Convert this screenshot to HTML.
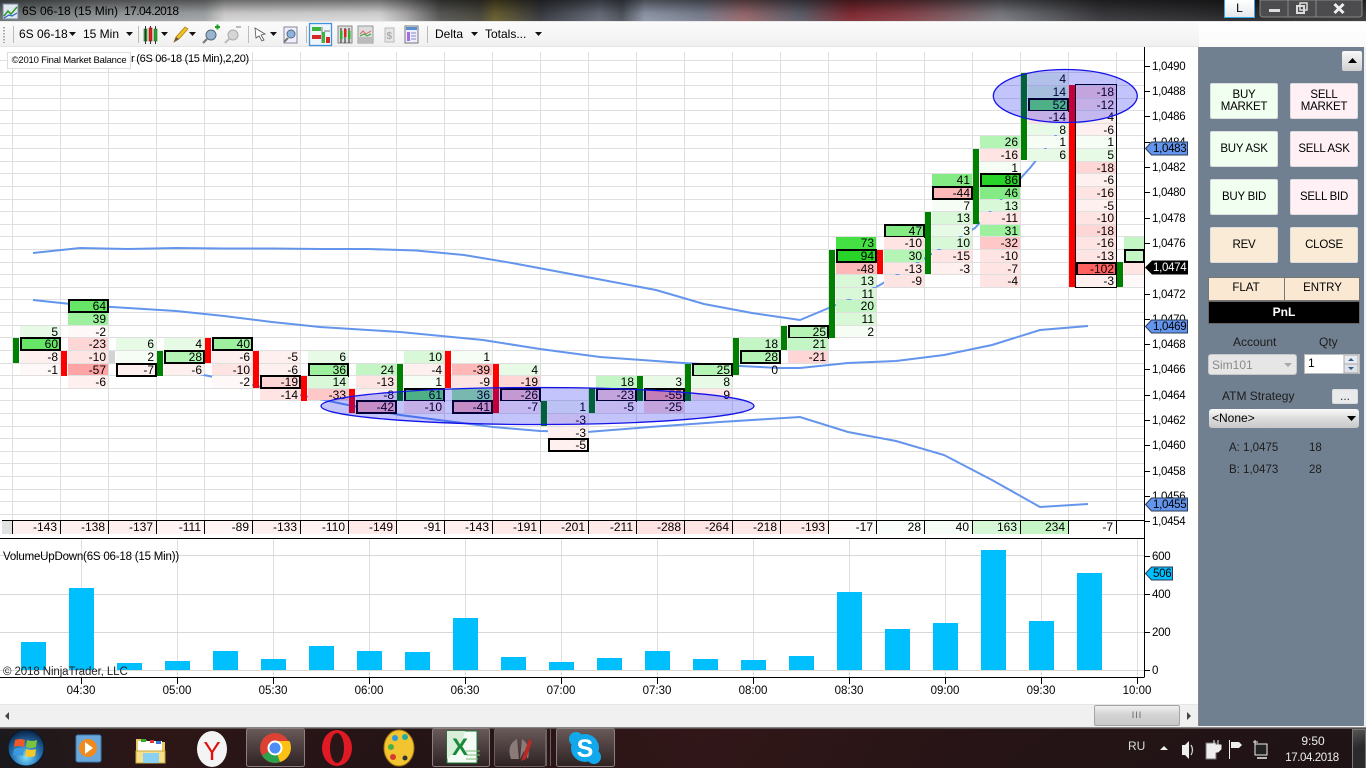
<!DOCTYPE html>
<html><head><meta charset="utf-8"><title>6S 06-18 (15 Min)</title>
<style>
html,body{margin:0;padding:0;width:1366px;height:768px;overflow:hidden;background:#fff}
body{position:relative;font:12px/14px "Liberation Sans",sans-serif;color:#000}
.a,svg.a{position:absolute}
#title{left:0;top:0;width:1366px;height:22px;background:linear-gradient(180deg,rgba(0,0,0,.5),rgba(0,0,0,.08) 60%,rgba(255,255,255,.05)),linear-gradient(90deg,#6a7070 0,#969a9c 100px,#a4a8aa 205px,#d8d6d6 225px,#dcdcdc 380px,#b0aeb0 405px,#5a5a58 440px,#4c4a40 480px,#6a6030 495px,#3a3c42 540px,#686e7c 600px,#50555e 622px,#939bac 645px,#7b8192 700px,#9a6a6e 745px,#5c606c 800px,#842c34 850px,#8a424a 905px,#7c7e84 1000px,#3a3a3e 1100px,#2a2a2c 1230px,#3a3a3c 1366px)}
#tline{left:0;top:21px;width:1366px;height:1px;background:#e8e8e8}
#tb{left:0;top:22px;width:1366px;height:25px;background:linear-gradient(180deg,#fbfbfb,#f0f0f0);border-bottom:1px solid #e4e4e4;box-sizing:border-box}
#tb2{left:1199px;top:22px;width:167px;height:25px;background:linear-gradient(180deg,#fff,#fafafa)}
.col{position:absolute;left:0;top:0}
.c{position:absolute;left:20px;width:38px;padding-right:2px;height:12px;line-height:12px;text-align:right;font-size:12px;color:#000;white-space:nowrap}
.b{margin-top:-1px;height:14px!important;line-height:14px;width:38px;padding-right:3px;box-shadow:inset 0 0 0 2px #000}
.bar{position:absolute;left:13px;width:6px}
.g{background:#008000}.rd{background:#f00}
.r1{top:73px}.r2{top:86px}.r3{top:99px;height:11px}.r4{top:111px}.r5{top:124px;height:11px}.r6{top:136px}.r7{top:149px}.r8{top:162px;height:11px}.r9{top:174px}.r10{top:187px}.r11{top:200px;height:11px}.r12{top:212px}.r13{top:225px;height:11px}.r14{top:237px}.r15{top:250px}.r16{top:263px;height:11px}.r17{top:275px}.r18{top:288px;height:11px}.r19{top:300px}.r20{top:313px}.r21{top:326px;height:11px}.r22{top:338px}.r23{top:351px}.r24{top:364px;height:11px}.r25{top:376px}.r26{top:389px;height:11px}.r27{top:401px}.r28{top:414px}.r29{top:427px;height:11px}.r30{top:439px}
.p1{background:#f5fdf5}.p2{background:#e6fae6}.p3{background:#d8f8d8}.p4{background:#c4f5c4}.p5{background:#b4f4b4}.p6{background:#9df09d}.p7{background:#84eb84}.p8{background:#66e566}.p9{background:#44e044}.p10{background:#28d428}
.n1{background:#fff8f8}.n2{background:#fff0f0}.n3{background:#ffe4e4}.n4{background:#ffd6d6}.n5{background:#ffc8c8}.n6{background:#ffb8b8}.n7{background:#ffa4a4}.n8{background:#ff6060}
.t{position:absolute;top:521px;height:13px;width:44px;padding-right:3px;text-align:right;line-height:13px;box-sizing:content-box;border-right:1px solid #000}
.lab{position:absolute;left:1152px;font-size:11.5px;letter-spacing:-.3px;line-height:12px;white-space:nowrap}
.tm{position:absolute;top:685px;width:50px;text-align:center;font-size:11.5px;line-height:13px}
.btn{position:absolute;width:66px;height:34px;border:1px solid #dcdcdc;border-radius:2px;text-align:center;font-size:11.5px;letter-spacing:-.25px;line-height:12px;display:flex;align-items:center;justify-content:center;box-sizing:content-box}
.bg{background:#f0fff0}.bp{background:#fff0f5}.bo{background:#faebd7}
.pl{position:absolute;font-size:12px;line-height:14px;color:#1c1c1c;white-space:nowrap}
</style></head><body>
<div class="a" id="title"></div><div class="a" id="tline"></div>
<div class="a" style="left:22px;top:4px;white-space:pre;color:#000">6S 06-18 (15 Min)</div>
<div class="a" style="left:124px;top:4px;white-space:pre;color:#000;letter-spacing:-.55px">17.04.2018</div>
<svg class="a" style="left:2px;top:3px" width="17" height="17" viewBox="0 0 17 17"><rect x="1" y="1" width="15" height="15" fill="#dfe8ee" stroke="#7a8a99"/><path d="M2 13l4-5 3 3 6-7" fill="none" stroke="#2a9a2a" stroke-width="1.5"/><path d="M2 15l5-3 3 1 5-3" fill="none" stroke="#2a62c8" stroke-width="1.2"/></svg>
<!-- window controls -->
<div class="a" style="left:1224px;top:0;width:29px;height:17px;background:linear-gradient(#fff,#e6e8ec);border:1px solid #35a8e8;border-top:0;text-align:center;font-size:12px;line-height:16px">L</div>
<svg class="a" style="left:1259px;top:0" width="107" height="19" viewBox="0 0 107 19"><path d="M1 0v14q0 3 3 3h96q3 0 3-3V0z" fill="#4c4c4e" stroke="#888"/><path d="M29 0v17M57 0v17" stroke="#888"/><rect x="10" y="9" width="11" height="3" fill="#ddd"/><rect x="38" y="6" width="7" height="7" fill="none" stroke="#ddd" stroke-width="2"/><rect x="41" y="3" width="7" height="7" fill="none" stroke="#ddd" stroke-width="1.5"/><path d="M75.500 4l9 9M84.500 4l-9 9" stroke="#eee" stroke-width="3"/></svg>
<div class="a" id="tb"></div><div class="a" id="tb2"></div>
<!-- toolbar -->
<svg class="a" style="left:0;top:22px" width="560" height="25" viewBox="0 0 560 25">
<path d="M4 5v16" stroke="#aaa" stroke-width="2" stroke-dasharray="1.5 1.5"/>
<path d="M13.5 4v17M138.5 4v17M248.5 4v17M306.5 4v17M427.5 4v17" stroke="#bbb"/>
<path d="M69 10h7l-3.500 4zM126 10h7l-3.500 4zM161 10h7l-3.500 4zM189 10h7l-3.500 4zM270 10h7l-3.500 4zM471 10h7l-3.500 4zM535 10h7l-3.500 4z" fill="#111"/>
<g><rect x="144" y="7" width="3" height="12" fill="#2fa52f" stroke="#1a6a1a" stroke-width=".6"/><path d="M145.500 4v18M150.500 4v18M155.500 4v18" stroke="#333"/><rect x="149" y="6" width="3" height="13" fill="#d22" stroke="#811" stroke-width=".6"/><rect x="154" y="7" width="3" height="12" fill="#2fa52f" stroke="#1a6a1a" stroke-width=".6"/></g>
<path d="M174 20l2-5 9-10 3 2-9 10z" fill="#f4c020" stroke="#a07a10" stroke-width=".7"/><path d="M174 20l2-5 3 2z" fill="#654"/>
<circle cx="211" cy="13" r="5" fill="#9ab4d0" stroke="#56687a"/><path d="M207 17l-4 4" stroke="#777" stroke-width="2"/><path d="M215 5h5M217.500 2.500v5" stroke="#1da01d" stroke-width="2"/>
<circle cx="233" cy="13" r="5" fill="#d6d6d6" stroke="#aaa"/><path d="M229 17l-4 4" stroke="#bbb" stroke-width="2"/><path d="M236 5h5" stroke="#bbb" stroke-width="2"/>
<path d="M255 6l10 6-4 1 3 5-2 1-3-5-3 2z" fill="#fff" stroke="#555" stroke-width=".8"/>
<rect x="284" y="5" width="13" height="16" fill="#eef" stroke="#889"/><circle cx="291" cy="12" r="4" fill="#8db4dc" stroke="#567"/><path d="M288 16l-4 4" stroke="#777" stroke-width="2"/>
<rect x="309.500" y="1.500" width="22" height="22" fill="#eef6fc" stroke="#3f93dd" stroke-width="1.300"/>
<rect x="312" y="5" width="9" height="4" fill="#3cb53c"/><rect x="312" y="13" width="9" height="4" fill="#d62828"/><path d="M322 5v16M324 9h6" stroke="#777"/><rect x="322" y="10" width="3" height="11" fill="#3cb53c"/><rect x="326" y="15" width="4" height="6" fill="#d62828"/>
<rect x="338" y="4" width="14" height="17" fill="#ddd" stroke="#888"/><path d="M341 6v15M345 6v15M349 6v15" stroke="#222"/><rect x="340" y="9" width="2.500" height="8" fill="#2cb52c"/><rect x="344" y="7" width="2.500" height="8" fill="#d22"/><rect x="348" y="9" width="2.500" height="8" fill="#2cb52c"/>
<rect x="358" y="4" width="15" height="17" fill="#ddd" stroke="#999"/><path d="M360 12l3-3 3 3 5-3" fill="none" stroke="#d66" /><path d="M360 14l4-2 3 2 4-2" fill="none" stroke="#3a3"/><rect x="359" y="15" width="13" height="5" fill="#bbb"/>
<rect x="385" y="6" width="9" height="14" fill="#e6e6e6" stroke="#bbb"/><text x="386.500" y="17" font-size="10" font-weight="bold" fill="#aaa" font-family="Liberation Sans">$</text>
<rect x="405" y="4" width="13" height="17" fill="#eef" stroke="#777"/><rect x="406" y="5" width="11" height="3" fill="#5a8fd0"/><rect x="407" y="10" width="3" height="9" fill="#a070e0"/><path d="M411 11h5M411 14h5M411 17h5" stroke="#88b"/>
</svg>
<div class="a" style="left:19px;top:27px">6S 06-18</div><div class="a" style="left:83px;top:27px">15 Min</div>
<div class="a" style="left:435px;top:27px">Delta</div><div class="a" style="left:485px;top:27px">Totals...</div>

<!-- grid and indicator lines -->
<svg class="a" style="left:0;top:0" width="1200" height="700" viewBox="0 0 1200 700" shape-rendering="crispEdges">
<g stroke="#dfdfdf" fill="none"><path d="M0 60.500H1144M0 72.500H1144M0 85.500H1144M0 98.500H1144M0 110.500H1144M0 123.500H1144M0 135.500H1144M0 148.500H1144M0 161.500H1144M0 173.500H1144M0 186.500H1144M0 199.500H1144M0 211.500H1144M0 224.500H1144M0 236.500H1144M0 249.500H1144M0 262.500H1144M0 274.500H1144M0 287.500H1144M0 299.500H1144M0 312.500H1144M0 325.500H1144M0 337.500H1144M0 350.500H1144M0 363.500H1144M0 375.500H1144M0 388.500H1144M0 400.500H1144M0 413.500H1144M0 426.500H1144M0 438.500H1144M0 451.500H1144M0 463.500H1144M0 476.500H1144M0 489.500H1144M0 501.500H1144M0 514.500H1144"/>
<path d="M12.500 52V520M60.500 52V520M108.500 52V520M156.500 52V520M204.500 52V520M252.500 52V520M300.500 52V520M348.500 52V520M396.500 52V520M444.500 52V520M492.500 52V520M540.500 52V520M588.500 52V520M636.500 52V520M684.500 52V520M732.500 52V520M780.500 52V520M828.500 52V520M876.500 52V520M924.500 52V520M972.500 52V520M1020.500 52V520M1068.500 52V520M1116.500 52V520"/>
<path d="M81.500 539V677M177.500 539V677M273.500 539V677M369.500 539V677M465.500 539V677M561.500 539V677M657.500 539V677M753.500 539V677M849.500 539V677M945.500 539V677M1041.500 539V677M1137.500 539V677"/>
<path d="M0 555.500H1144M0 594.500H1144M0 632.500H1144M0 670.500H1144" stroke="#d8d8d8"/></g></svg>
<svg class="a" style="left:0;top:0" width="1200" height="540" viewBox="0 0 1200 540"><g fill="none" stroke="#6495ed" stroke-width="2">
<polyline points="33,253 80,248 128,249 176,248 224,248.500 272,248.500 320,249 368,249 416,250.500 464,255 512,263 560,272 608,281 656,290 704,304 752,313 800,320 848,300 880,285 975,228 1030,168 1060,130"/>
<polyline points="33,300 80,305 128,308 176,311 224,316 272,322 320,327 400,332 483,340 540,349 600,357 683,363 740,366 780,368 800,368 848,363 896,361 944,355 992,345 1040,330 1088,326"/>
<polyline points="165,367 204,375 252,385 300,395 348,405 400,415 493,427 540,431 587,432 650,427 720,422 800,417 848,432 896,441 944,455 992,480 1040,507 1088,504"/>
</g></svg>

<!-- footprint columns -->
<div class="col" style="left:0"><i class="bar g" style="top:338px;height:25px"></i><div class="c r21 p2">5</div><div class="c r22 p8 b">60</div><div class="c r23 n2">-8</div><div class="c r24 n1">-1</div></div>
<div class="col" style="left:48px"><i class="bar rd" style="top:351px;height:25px"></i><div class="c r19 p8 b">64</div><div class="c r20 p6">39</div><div class="c r21 n1">-2</div><div class="c r22 n4">-23</div><div class="c r23 n3">-10</div><div class="c r24 n7">-57</div><div class="c r25 n2">-6</div></div>
<div class="col" style="left:96px"><i class="bar" style="top:351px;height:12px;background:#d3d3d3"></i><div class="c r22 p2">6</div><div class="c r23 p1">2</div><div class="c r24 n2 b">-7</div></div>
<div class="col" style="left:144px"><i class="bar g" style="top:351px;height:25px"></i><div class="c r22 p2">4</div><div class="c r23 p5 b">28</div><div class="c r24 n2">-6</div></div>
<div class="col" style="left:192px"><i class="bar rd" style="top:338px;height:25px"></i><div class="c r22 p6 b">40</div><div class="c r23 n2">-6</div><div class="c r24 n3">-10</div><div class="c r25 n1">-2</div></div>
<div class="col" style="left:240px"><i class="bar rd" style="top:351px;height:37px"></i><div class="c r23 n2">-5</div><div class="c r24 n2">-6</div><div class="c r25 n4 b">-19</div><div class="c r26 n3">-14</div></div>
<div class="col" style="left:288px"><i class="bar rd" style="top:376px;height:25px"></i><div class="c r23 p2">6</div><div class="c r24 p6 b">36</div><div class="c r25 p3">14</div><div class="c r26 n5">-33</div></div>
<div class="col" style="left:336px"><i class="bar rd" style="top:389px;height:24px"></i><div class="c r24 p4">24</div><div class="c r25 n3">-13</div><div class="c r26 n2">-8</div><div class="c r27 n6 b">-42</div></div>
<div class="col" style="left:384px"><i class="bar g" style="top:364px;height:37px"></i><div class="c r23 p3">10</div><div class="c r24 n2">-4</div><div class="c r25 p1">1</div><div class="c r26 p8 b">61</div><div class="c r27 n3">-10</div></div>
<div class="col" style="left:432px"><i class="bar rd" style="top:351px;height:37px"></i><div class="c r23 p1">1</div><div class="c r24 n6">-39</div><div class="c r25 n3">-9</div><div class="c r26 p6">36</div><div class="c r27 n6 b">-41</div></div>
<div class="col" style="left:480px"><i class="bar rd" style="top:364px;height:49px"></i><div class="c r24 p2">4</div><div class="c r25 n4">-19</div><div class="c r26 n5 b">-26</div><div class="c r27 n2">-7</div></div>
<div class="col" style="left:528px"><i class="bar g" style="top:401px;height:25px"></i><div class="c r27 p1">1</div><div class="c r28 n2">-3</div><div class="c r29 n2">-3</div><div class="c r30 n2 b">-5</div></div>
<div class="col" style="left:576px"><i class="bar g" style="top:388px;height:25px"></i><div class="c r25 p4">18</div><div class="c r26 n4 b">-23</div><div class="c r27 n2">-5</div></div>
<div class="col" style="left:624px"><i class="bar g" style="top:376px;height:25px"></i><div class="c r25 p2">3</div><div class="c r26 n7 b">-55</div><div class="c r27 n4">-25</div></div>
<div class="col" style="left:672px"><i class="bar g" style="top:364px;height:37px"></i><div class="c r24 p5 b">25</div><div class="c r25 p2">8</div><div class="c r26 n3" style="background:#ffe8e8">9</div></div>
<div class="col" style="left:720px"><i class="bar g" style="top:338px;height:37px"></i><div class="c r22 p4">18</div><div class="c r23 p5 b">28</div><div class="c r24">0</div></div>
<div class="col" style="left:768px"><i class="bar g" style="top:326px;height:24px"></i><div class="c r21 p5 b">25</div><div class="c r22 p4">21</div><div class="c r23 n4">-21</div></div>
<div class="col" style="left:816px"><i class="bar g" style="top:250px;height:88px"></i><div class="c r14 p9">73</div><div class="c r15 p10 b">94</div><div class="c r16 n6">-48</div><div class="c r17 p3">13</div><div class="c r18 p3">11</div><div class="c r19 p4">20</div><div class="c r20 p3">11</div><div class="c r21 p1">2</div></div>
<div class="col" style="left:864px"><i class="bar rd" style="top:250px;height:24px"></i><div class="c r13 p7 b">47</div><div class="c r14 n3">-10</div><div class="c r15 p5">30</div><div class="c r16 n3">-13</div><div class="c r17 n3">-9</div></div>
<div class="col" style="left:912px"><i class="bar g" style="top:212px;height:62px"></i><div class="c r9 p7">41</div><div class="c r10 n6 b">-44</div><div class="c r11 p1">7</div><div class="c r12 p3">13</div><div class="c r13 p2">3</div><div class="c r14 p3">10</div><div class="c r15 n3">-15</div><div class="c r16 n2">-3</div></div>
<div class="col" style="left:960px"><i class="bar g" style="top:149px;height:75px"></i><div class="c r6 p5">26</div><div class="c r7 n3">-16</div><div class="c r8 p1">1</div><div class="c r9 p10 b">86</div><div class="c r10 p7">46</div><div class="c r11 p3">13</div><div class="c r12 n3">-11</div><div class="c r13 p6">31</div><div class="c r14 n5">-32</div><div class="c r15 n3">-10</div><div class="c r16 n3">-7</div><div class="c r17 n3">-4</div></div>
<div class="col" style="left:1008px"><i class="bar g" style="top:73px;height:87px"></i><div class="c r1 p2">4</div><div class="c r2 p3">14</div><div class="c r3 p8 b">52</div><div class="c r4 n3">-14</div><div class="c r5 p2">8</div><div class="c r6 p1">1</div><div class="c r7 p2">6</div></div>
<div class="col" style="left:1056px"><i class="bar rd" style="top:85px;height:202px"></i><div class="c r2 n4">-18</div><div class="c r3 n3">-12</div><div class="c r4 p2" style="background:#fff0f0">4</div><div class="c r5 n2">-6</div><div class="c r6 p1">1</div><div class="c r7 p2">5</div><div class="c r8 n4">-18</div><div class="c r9 n2">-6</div><div class="c r10 n3">-16</div><div class="c r11 n2">-5</div><div class="c r12 n3">-10</div><div class="c r13 n4">-18</div><div class="c r14 n3">-16</div><div class="c r15 n3">-13</div><div class="c r16 n8 b">-102</div><div class="c r17 n2">-3</div><div class="a" style="left:19px;top:84px;width:40px;height:202px;border:1px solid #000"></div></div>
<div class="col" style="left:1104px"><i class="bar g" style="top:262px;height:25px"></i><div class="c r14 p4" style="width:20px;padding:0"></div><div class="c r15 p4 b" style="width:21px;padding:0;box-sizing:border-box"></div><div class="c r16 n3" style="width:20px;padding:0"></div><div class="c r17 n1" style="width:20px;padding:0"></div></div>

<svg class="a" style="left:0;top:0" width="1200" height="540" viewBox="0 0 1200 540"><g fill="#0000f0" fill-opacity=".23" stroke="#1414e8" stroke-width="1.300"><ellipse cx="537.500" cy="406" rx="216.500" ry="18.500"/><ellipse cx="1065.300" cy="96" rx="72" ry="26.500"/></g></svg>

<!-- label top-left -->
<div class="a" style="left:131px;top:52px;font-size:11px;letter-spacing:-.3px;line-height:14px;white-space:nowrap">r&#8201;(6S 06-18 (15 Min),2,20)</div>
<div class="a" style="left:7px;top:52px;width:122px;height:15px;background:#fff;border:1px solid #ddd;font-size:9.500px;letter-spacing:-.2px;line-height:15px;text-align:center;white-space:nowrap">©2010 Final Market Balance</div>

<!-- totals -->
<div class="a" style="left:2px;top:520px;width:1142px;height:1px;background:#000"></div>
<div class="a" style="left:2px;top:521px;width:10px;height:13px;background:#e2e2e2"></div>
<div class="a" style="left:0;top:538px;width:1144px;height:1px;background:#000"></div>
<div class="a" style="left:12px;top:521px;width:1px;height:13px;background:#000"></div>
<div class="t" style="left:13px;background:#fff0f0">-143</div><div class="t" style="left:61px;background:#fff0f0">-138</div><div class="t" style="left:109px;background:#fff0f0">-137</div><div class="t" style="left:157px;background:#fff3f3">-111</div><div class="t" style="left:205px;background:#fff5f5">-89</div><div class="t" style="left:253px;background:#fff0f0">-133</div><div class="t" style="left:301px;background:#fff3f3">-110</div><div class="t" style="left:349px;background:#ffeaea">-149</div><div class="t" style="left:397px;background:#fff5f5">-91</div><div class="t" style="left:445px;background:#ffefef">-143</div><div class="t" style="left:493px;background:#ffeaea">-191</div><div class="t" style="left:541px;background:#ffeaea">-201</div><div class="t" style="left:589px;background:#ffeaea">-211</div><div class="t" style="left:637px;background:#ffe2e2">-288</div><div class="t" style="left:685px;background:#ffe4e4">-264</div><div class="t" style="left:733px;background:#ffe8e8">-218</div><div class="t" style="left:781px;background:#ffeaea">-193</div><div class="t" style="left:829px;background:#fffafa">-17</div><div class="t" style="left:877px;background:#fafefa">28</div><div class="t" style="left:925px;background:#f6fdf6">40</div><div class="t" style="left:973px;background:#d6f8d6">163</div><div class="t" style="left:1021px;background:#c6f6c6">234</div><div class="t" style="left:1069px;background:#fffcfc">-7</div>

<!-- right axis frame -->
<svg class="a" style="left:0;top:0" width="1200" height="700" viewBox="0 0 1200 700">
<g shape-rendering="crispEdges"><path d="M1144.500 47V677M0 677.500H1144.500" stroke="#000" fill="none"/>
<path d="M1145 66.500h5M1145 91.500h5M1145 116.500h5M1145 142.500h5M1145 167.500h5M1145 192.500h5M1145 218.500h5M1145 243.500h5M1145 294.500h5M1145 319.500h5M1145 344.500h5M1145 369.500h5M1145 395.500h5M1145 420.500h5M1145 445.500h5M1145 471.500h5M1145 496.500h5M1145 521.500h5M1145 556.500h5M1145 594.500h5M1145 632.500h5M1145 670.500h5" stroke="#000"/>
<path d="M81.500 678v6M177.500 678v6M273.500 678v6M369.500 678v6M465.500 678v6M561.500 678v6M657.500 678v6M753.500 678v6M849.500 678v6M945.500 678v6M1041.500 678v6M1137.500 678v6" stroke="#000"/></g>
<rect x="21" y="642" width="25" height="28" fill="#00bfff"/><rect x="69" y="588" width="25" height="82" fill="#00bfff"/><rect x="117" y="663" width="25" height="7" fill="#00bfff"/><rect x="165" y="661" width="25" height="9" fill="#00bfff"/><rect x="213" y="651" width="25" height="19" fill="#00bfff"/><rect x="261" y="659" width="25" height="11" fill="#00bfff"/><rect x="309" y="646" width="25" height="24" fill="#00bfff"/><rect x="357" y="651" width="25" height="19" fill="#00bfff"/><rect x="405" y="652" width="25" height="18" fill="#00bfff"/><rect x="453" y="618" width="25" height="52" fill="#00bfff"/><rect x="501" y="657" width="25" height="13" fill="#00bfff"/><rect x="549" y="662" width="25" height="8" fill="#00bfff"/><rect x="597" y="658" width="25" height="12" fill="#00bfff"/><rect x="645" y="651" width="25" height="19" fill="#00bfff"/><rect x="693" y="659" width="25" height="11" fill="#00bfff"/><rect x="741" y="660" width="25" height="10" fill="#00bfff"/><rect x="789" y="656" width="25" height="14" fill="#00bfff"/><rect x="837" y="592" width="25" height="78" fill="#00bfff"/><rect x="885" y="629" width="25" height="41" fill="#00bfff"/><rect x="933" y="623" width="25" height="47" fill="#00bfff"/><rect x="981" y="550" width="25" height="120" fill="#00bfff"/><rect x="1029" y="621" width="25" height="49" fill="#00bfff"/><rect x="1077" y="573" width="25" height="97" fill="#00bfff"/>
</svg>
<div class="lab" style="top:61px">1,0490</div><div class="lab" style="top:86px">1,0488</div><div class="lab" style="top:111px">1,0486</div><div class="lab" style="top:137px">1,0484</div><div class="lab" style="top:162px">1,0482</div><div class="lab" style="top:187px">1,0480</div><div class="lab" style="top:213px">1,0478</div><div class="lab" style="top:238px">1,0476</div><div class="lab" style="top:289px">1,0472</div><div class="lab" style="top:314px">1,0470</div><div class="lab" style="top:339px">1,0468</div><div class="lab" style="top:364px">1,0466</div><div class="lab" style="top:390px">1,0464</div><div class="lab" style="top:415px">1,0462</div><div class="lab" style="top:440px">1,0460</div><div class="lab" style="top:466px">1,0458</div><div class="lab" style="top:491px">1,0456</div><div class="lab" style="top:516px">1,0454</div>
<div class="lab" style="top:551px">600</div><div class="lab" style="top:589px">400</div><div class="lab" style="top:627px">200</div><div class="lab" style="top:665px">0</div>
<svg class="a" style="left:1144px;top:0" width="50" height="600" viewBox="0 0 50 600"><g stroke="#2b3a55" fill="#6495ed"><path d="M1.500 148.500l6-6.500h36v13h-36z"/><path d="M1.500 326.500l6-6.500h36v13h-36z"/><path d="M1.500 504.500l6-6.500h36v13h-36z"/><path d="M1.500 573.500l6-6.500h21v13h-21z" fill="#00bfff"/></g><path d="M1 267.500l7-7h36v14h-36z" fill="#000"/></svg>
<div class="lab" style="top:143px;left:1153px">1,0483</div><div class="lab" style="top:321px;left:1153px">1,0469</div><div class="lab" style="top:499px;left:1153px">1,0455</div><div class="lab" style="top:568px;left:1153px">506</div><div class="lab" style="top:262px;left:1153px;color:#fff">1,0474</div>

<div class="a" style="left:3px;top:550px;font-size:11.500px;letter-spacing:-.2px;white-space:nowrap">VolumeUpDown(6S 06-18 (15 Min))</div>
<div class="a" style="left:3px;top:665px;font-size:11.500px;letter-spacing:-.1px;white-space:nowrap;color:#222">© 2018 NinjaTrader, LLC</div>
<div class="tm" style="left:56px">04:30</div><div class="tm" style="left:152px">05:00</div><div class="tm" style="left:248px">05:30</div><div class="tm" style="left:344px">06:00</div><div class="tm" style="left:440px">06:30</div><div class="tm" style="left:536px">07:00</div><div class="tm" style="left:632px">07:30</div><div class="tm" style="left:728px">08:00</div><div class="tm" style="left:824px">08:30</div><div class="tm" style="left:920px">09:00</div><div class="tm" style="left:1016px">09:30</div><div class="tm" style="left:1112px">10:00</div>

<!-- horizontal scrollbar -->
<div class="a" style="left:0;top:704px;width:1198px;height:23px;background:#f0f0f0;border-top:1px solid #e6e6e6;box-sizing:border-box"></div>
<div class="a" style="left:1094px;top:705px;width:86px;height:21px;border:1px solid #a4a4a4;border-radius:2px;box-sizing:border-box;background:linear-gradient(#f0f0f0,#d4d4d4 45%,#c8c8c8);text-align:center;font-size:9px;line-height:19px;color:#666;letter-spacing:1px">III</div>
<svg class="a" style="left:0;top:708px" width="1198" height="16" viewBox="0 0 1198 16"><path d="M9 4v8l-4-4z" fill="#444"/><path d="M1187 4v8l4-4z" fill="#444"/></svg>

<!-- right panel -->
<div class="a" style="left:1198px;top:47px;width:166px;height:679px;background:#708090;border-left:1px solid #888;box-sizing:border-box"></div>
<div class="a" style="left:1198px;top:726px;width:168px;height:2px;background:#f5f5f5"></div>
<div class="a" style="left:1364px;top:47px;width:2px;height:680px;background:#f0f0f0"></div>
<div class="a" style="left:1342px;top:51px;width:20px;height:20px;background:linear-gradient(#f8f8f8,#d0d0d0);border-radius:2px"></div>
<svg class="a" style="left:1342px;top:51px" width="20" height="20"><path d="M6 12h9l-4.500-5z" fill="#000"/></svg>
<div class="btn bg" style="left:1210px;top:83px">BUY<br>MARKET</div><div class="btn bp" style="left:1290px;top:83px">SELL<br>MARKET</div>
<div class="btn bg" style="left:1210px;top:131px">BUY ASK</div><div class="btn bp" style="left:1290px;top:131px">SELL ASK</div>
<div class="btn bg" style="left:1210px;top:179px">BUY BID</div><div class="btn bp" style="left:1290px;top:179px">SELL BID</div>
<div class="btn bo" style="left:1210px;top:227px">REV</div><div class="btn bo" style="left:1290px;top:227px">CLOSE</div>
<div class="a" style="left:1208px;top:277px;width:152px;height:24px;background:#fae8d3;border:1px solid #777;box-sizing:border-box"></div>
<div class="a" style="left:1284px;top:277px;width:1px;height:24px;background:#777"></div>
<div class="pl" style="left:1208px;top:281px;width:76px;text-align:center;color:#000;font-size:11.500px">FLAT</div><div class="pl" style="left:1285px;top:281px;width:75px;text-align:center;color:#000;font-size:11.500px">ENTRY</div>
<div class="a" style="left:1208px;top:301px;width:152px;height:23px;background:#000;border:1px solid #666;box-sizing:border-box;color:#fff;font-weight:bold;text-align:center;line-height:21px">PnL</div>
<div class="pl" style="left:1233px;top:335px">Account</div><div class="pl" style="left:1319px;top:335px">Qty</div>
<div class="a" style="left:1208px;top:354px;width:89px;height:21px;background:#e6e6e6;border:1px solid #c8c8c8;border-radius:3px;box-sizing:border-box;color:#8a8a8a;padding-left:3px;line-height:20px">Sim101</div>
<svg class="a" style="left:1282px;top:360px" width="12" height="10"><path d="M2 3h8l-4 4z" fill="#a8a8a8"/></svg>
<div class="a" style="left:1304px;top:354px;width:56px;height:20px;background:#fff;border:1px solid #bbb;box-sizing:border-box;padding-left:3px;line-height:16px">1</div>
<svg class="a" style="left:1343px;top:355px" width="16" height="19"><rect x="1" y="0" width="14" height="9" fill="#e8eaf0" stroke="#aaa"/><rect x="1" y="9" width="14" height="9" fill="#dfe2e8" stroke="#aaa"/><path d="M5 6l3-3 3 3zM5 12l3 3 3-3z" fill="#345a90"/></svg>
<div class="pl" style="left:1222px;top:389px">ATM Strategy</div>
<div class="a" style="left:1332px;top:389px;width:26px;height:15px;background:#e8eaec;border:1px solid #ddd;border-radius:2px;box-sizing:border-box;text-align:center;line-height:13px;color:#333">...</div>
<div class="a" style="left:1209px;top:409px;width:150px;height:19px;background:linear-gradient(#fafafa,#dcdcdc 50%,#c8c8c8);border-radius:3px;padding-left:3px;box-sizing:border-box;line-height:19px">&lt;None&gt;</div>
<svg class="a" style="left:1346px;top:414px" width="12" height="10"><path d="M1 2h9l-4.500 5z" fill="#000"/></svg>
<div class="pl" style="left:1229px;top:441px;font-size:11.500px">A: 1,0475</div><div class="pl" style="left:1309px;top:441px;font-size:11.500px">18</div>
<div class="pl" style="left:1229px;top:463px;font-size:11.500px">B: 1,0473</div><div class="pl" style="left:1309px;top:463px;font-size:11.500px">28</div>

<!-- taskbar -->
<div class="a" style="left:0;top:727px;width:1366px;height:41px;background:linear-gradient(180deg,#8a8585 0,#8a8585 1px,#2c1c1c 2px,#2a1414 6px,#1e1214 100%),#201214"></div>
<div class="a" style="left:0;top:729px;width:1366px;height:39px;background:linear-gradient(90deg,#1a1a1e,#2e1616 150px,#241416 400px,#321718 700px,#261416 1000px,#1e1316 1366px);opacity:.9"></div>
<svg class="a" style="left:0;top:727px" width="640" height="41" viewBox="0 0 640 41">
<defs><radialGradient id="o" cx=".5" cy=".75" r=".7"><stop offset="0" stop-color="#7fe0ff"/><stop offset=".5" stop-color="#2a7ab8"/><stop offset="1" stop-color="#0c2c52"/></radialGradient><linearGradient id="gl" x1="0" y1="0" x2="0" y2="1"><stop offset="0" stop-color="#6a5a5a"/><stop offset="1" stop-color="#2e2222"/></linearGradient></defs>
<circle cx="26" cy="21" r="18" fill="url(#o)" stroke="#0a1a30"/>
<path d="M15 13q5-2 10 0l-1 7q-5-2-10 0z" fill="#f0582a"/><path d="M27 13q5 2 10 0l-1 7q-5 2-10 0z" fill="#7cc43c"/><path d="M14 22q5-2 10 0l-1 7q-5-2-10 0z" fill="#3a9ae0"/><path d="M26 22q5 2 10 0l-1 7q-5 2-10 0z" fill="#f8c82a"/>
<g><rect x="76" y="8" width="25" height="27" rx="2" fill="#6aa8dc" stroke="#3a78b0"/><circle cx="88" cy="21" r="9" fill="#f08a1c"/><path d="M85 15l8 6-8 6z" fill="#fff"/></g>
<g><path d="M136 12h9l3 3h17v20h-29z" fill="#e8c860"/><rect x="138" y="14" width="24" height="10" fill="#fff"/><rect x="141" y="12" width="5" height="3" fill="#3a3"/><rect x="150" y="13" width="4" height="3" fill="#d33"/><rect x="156" y="14" width="5" height="3" fill="#37d"/><path d="M136 24h29v12h-29z" fill="#f6e08a" stroke="#c8a840"/><rect x="143" y="26" width="16" height="10" fill="#8ad0f0"/></g>
<g><ellipse cx="212" cy="22" rx="15" ry="18" fill="#f4f4f4"/><text x="212" y="33" text-anchor="middle" font-family="Liberation Sans" font-size="26" fill="#e01010">Y</text></g>
<rect x="246.500" y="1.500" width="58" height="38" rx="2" fill="url(#gl)" stroke="#8a8080"/>
<g><circle cx="275" cy="21" r="15" fill="#dc4234"/><path d="M275 21L262 28.500A15 15 0 0 0 280 35z" fill="#2ba24c"/><path d="M275 21L280 35A15 15 0 0 0 289.500 14L275 14z" fill="#fbc116"/><circle cx="275" cy="21" r="6.500" fill="#4a8df4" stroke="#fff" stroke-width="2"/></g>
<g><ellipse cx="337" cy="21" rx="15" ry="18" fill="#e01a24"/><ellipse cx="337" cy="21" rx="7" ry="15" fill="#2a1616"/></g>
<g><ellipse cx="399" cy="21" rx="15" ry="18" fill="#f2c430" stroke="#a87810"/><circle cx="395" cy="11" r="3" fill="#2a9ad8"/><circle cx="405" cy="10" r="3" fill="#28a8a0"/><circle cx="391" cy="20" r="3" fill="#48b048"/><circle cx="393" cy="30" r="3" fill="#d83a30"/><circle cx="405" cy="31" r="2.500" fill="#333"/></g>
<rect x="432.500" y="1.500" width="57" height="38" rx="2" fill="url(#gl)" stroke="#8a8080"/>
<g><rect x="447" y="4" width="30" height="32" fill="#f4fbf4" stroke="#1a7a3a"/><path d="M447 4h18l-4 16-14 12z" fill="#d8eed8"/><text x="452" y="28" font-family="Liberation Sans" font-weight="bold" font-size="24" fill="#1a8a3a">X</text><path d="M466 24h14M466 28h14M466 32h12" stroke="#7ab87a"/></g>
<rect x="494.500" y="1.500" width="51" height="38" rx="2" fill="url(#gl)" stroke="#6a6060"/>
<path d="M511 32q-5-14 6-20l2 20zM520 32l2-20q9 6 6 20l-4-8z" fill="#8a7a78"/><path d="M521 34l8-22 3 3-6 17z" fill="#b82a26"/>
<path d="M546.500 2v37M550.500 2v37" stroke="#6a6060"/>
<rect x="556.500" y="1.500" width="58" height="38" rx="2" fill="url(#gl)" stroke="#8a8080"/>
<g><circle cx="585" cy="21" r="14" fill="#12a8ec"/><circle cx="576" cy="12" r="7" fill="#12a8ec"/><circle cx="594" cy="30" r="7" fill="#12a8ec"/><text x="585" y="30" text-anchor="middle" font-family="Liberation Sans" font-weight="bold" font-size="25" fill="#fff">S</text></g>
</svg>
<div class="a" style="left:1128px;top:739px;color:#ddd;font-size:12px">RU</div>
<div class="a" style="left:1290px;top:734px;width:46px;text-align:center;color:#eee;font-size:12px">9:50</div>
<div class="a" style="left:1278px;top:751px;width:68px;text-align:center;color:#eee;font-size:11.500px;letter-spacing:-.4px;white-space:nowrap">17.04.2018</div>
<svg class="a" style="left:1155px;top:733px" width="120" height="33" viewBox="0 0 120 33">
<path d="M5 17h8l-4-4z" fill="#eee"/>
<path d="M27 12h3l4-4v18l-4-4h-3z" fill="#eee"/><path d="M36 12q3 5 0 10" fill="none" stroke="#ccc" stroke-width="1.300"/>
<path d="M51 10h10v16h-10z" fill="#eee" stroke="#777"/><path d="M59 7v5M63 7v5M56 12h10v4l-3 3h-4l-3-3z" fill="#eee" stroke="#eee"/>
<path d="M74.500 7v19" stroke="#eee"/><path d="M76 9h8l3 3-3 3h-8z" fill="#eee"/>
<path d="M100 7v10M98 9h5" stroke="#eee"/><rect x="100" y="11" width="12" height="11" fill="#222" stroke="#eee"/><path d="M102 25h10" stroke="#eee" stroke-width="1.500"/>
</svg>
<div class="a" style="left:1352px;top:729px;width:12px;height:39px;border:1px solid #777;background:linear-gradient(160deg,#555,#2a2a2c 45%)"></div>
</body></html>
